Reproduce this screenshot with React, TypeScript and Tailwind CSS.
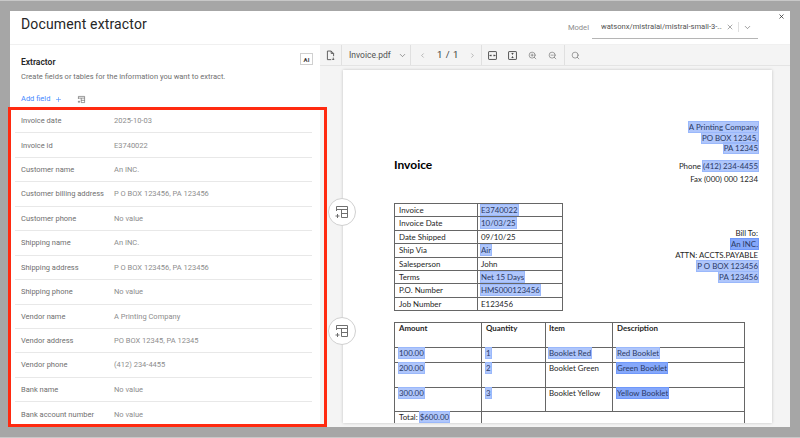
import { ChevronDown, ChevronLeft, ChevronRight, Plus, Search, X, ZoomIn, ZoomOut } from 'lucide-react';
import type { ReactNode } from 'react';

const FIELDS = [
  ['Invoice date', '2025-10-03'],
  ['Invoice id', 'E3740022'],
  ['Customer name', 'An INC.'],
  ['Customer billing address', 'P O BOX 123456, PA 123456'],
  ['Customer phone', 'No value'],
  ['Shipping name', 'An INC.'],
  ['Shipping address', 'P O BOX 123456, PA 123456'],
  ['Shipping phone', 'No value'],
  ['Vendor name', 'A Printing Company'],
  ['Vendor address', 'PO BOX 12345, PA 12345'],
  ['Vendor phone', '(412) 234-4455'],
  ['Bank name', 'No value'],
  ['Bank account number', 'No value'],
];

const SUMMARY: [string, string, boolean][] = [
  ['Invoice', 'E3740022', true],
  ['Invoice Date', '10/03/25', true],
  ['Date Shipped', '09/10/25', false],
  ['Ship Via', 'Air', true],
  ['Salesperson', 'John', false],
  ['Terms', 'Net 15 Days', true],
  ['P.O. Number', 'HMS000123456', true],
  ['Job Number', 'E123456', false],
];

function Hl({ children, strong }: { children: ReactNode; strong?: boolean }) {
  return (
    <span className={`text-[#2b3a66] outline outline-1 ${strong ? 'bg-[#85a8fb] outline-[#6f98fa]' : 'bg-[#afc6fb] outline-[#9ab8fb]'}`}>
      {children}
    </span>
  );
}

function TableIcon({ size = 12, className = '' }: { size?: number; className?: string }) {
  return (
    <svg width={size} height={size} viewBox="0 0 16 16" fill="none" stroke="currentColor" strokeWidth="1" className={className}>
      <path d="M2.5 7V2.5h11v11H7.5" />
      <path d="M2.5 5.5h11M7.5 5.5v8M7.5 9.5h6" />
      <path d="M3.5 10v4M1.5 12h4" />
    </svg>
  );
}

function FileIcon() {
  return (
    <svg width="11" height="11" viewBox="0 0 16 16" fill="none" stroke="#525252" strokeWidth="1.3">
      <path d="M9 14H3.5V1.5H9L12.5 5v4" />
      <path d="M9 1.5V5h3.5" />
      <path d="M12 11v3.5M10.5 13l1.5 1.5 1.5-1.5" />
    </svg>
  );
}

function FitIcon({ vertical }: { vertical?: boolean }) {
  return (
    <svg width="9" height="9" viewBox="0 0 16 16" fill="none" stroke="#393939" strokeWidth="1.5">
      <rect x="1" y="1" width="14" height="14" rx="1" />
      {vertical ? <path d="M8 3.5v3M8 9.5v3M6.5 5l1.5-1.5L9.5 5M6.5 11L8 12.5 9.5 11" /> : <path d="M3.5 8h3M9.5 8h3M5 6.5L3.5 8 5 9.5M11 6.5L12.5 8 11 9.5" />}
    </svg>
  );
}

function FloatingTable({ className }: { className: string }) {
  return (
    <div className={`absolute left-[328px] flex h-[28px] w-[28px] items-center justify-center rounded-full border border-[#d0d0d0] bg-white text-[#6f6f6f] ${className}`}>
      <TableIcon size={16} />
    </div>
  );
}

function Toolbar() {
  return (
    <div className="flex h-[21px] shrink-0 items-center border-b border-[#e4e4e4] text-[#525252]">
      <div className="flex w-[21px] justify-center"><FileIcon /></div>
      <div className="flex h-full w-[69px] items-center border-l border-[#e0e0e0] pl-[7px] text-[8.5px]">
        Invoice.pdf
        <ChevronDown size={9} strokeWidth={1.5} className="ml-[7px]" />
      </div>
      <div className="flex h-full w-[71px] items-center border-l border-[#e0e0e0] text-[#8d8d8d]">
        <ChevronLeft size={7} strokeWidth={2} className="ml-[8px]" />
        <span className="ml-[11px] w-[24px] whitespace-nowrap text-[9.5px] tracking-[0.5px] text-[#393939]">1 / 1</span>
        <ChevronRight size={7} strokeWidth={2} className="ml-[8px]" />
      </div>
      <div className="flex h-full w-[83px] items-center gap-[11px] border-l border-[#e0e0e0] pl-[6px] text-[#525252]">
        <FitIcon />
        <FitIcon vertical />
        <ZoomIn size={9} strokeWidth={1.4} />
        <ZoomOut size={9} strokeWidth={1.4} />
      </div>
      <div className="flex h-full items-center border-l border-[#e0e0e0] pl-[6px]">
        <Search size={9} strokeWidth={1.4} />
      </div>
    </div>
  );
}

function InvoicePage() {
  return (
    <div className="mx-auto h-[353px] w-[429px] overflow-hidden bg-white pl-[51px] pr-[14px] text-[7.9px] leading-[10.5px] text-[#262626] shadow-[0_0_3px_rgba(0,0,0,0.2)]" style={{ fontFamily: 'Lato, sans-serif' }}>
      <div className="flex h-[133px] justify-between pt-[52px]">
        <div className="mt-[35px] text-[12px] font-bold leading-[16px] text-black">Invoice</div>
        <div className="text-right">
          <div><Hl>A Printing Company</Hl></div>
          <div><Hl>PO BOX 12345,</Hl></div>
          <div><Hl>PA 12345</Hl></div>
          <div className="mt-[7px]">Phone <Hl>(412) 234-4455</Hl></div>
          <div className="mt-[3px]">Fax (000) 000 1234</div>
        </div>
      </div>
      <div className="flex justify-between">
        <table className="h-[108px] w-[169px] table-fixed border-collapse">
          <tbody>
            {SUMMARY.map(([label, value, hl]) => (
              <tr key={label} className="h-[13.4px]">
                <td className="w-[83px] border border-[#666] py-0 pl-[4px]">{label}</td>
                <td className="border border-[#666] py-0 pl-[3px]">{hl ? <Hl>{value}</Hl> : value}</td>
              </tr>
            ))}
          </tbody>
        </table>
        <div className="mt-[25px] text-right leading-[11px]">
          <div>Bill To:</div>
          <div><Hl strong>An INC.</Hl></div>
          <div>ATTN: ACCTS.PAYABLE</div>
          <div><Hl>P O BOX 123456</Hl></div>
          <div><Hl>PA 123456</Hl></div>
        </div>
      </div>
      <table className="mt-[11px] w-[351px] table-fixed border-collapse">
        <tbody>
          <tr className="h-[25px] align-top font-bold">
            <td className="w-[87px] border border-[#666] pl-[4px]">Amount</td>
            <td className="w-[64px] border border-[#666] pl-[4px]">Quantity</td>
            <td className="w-[67px] border border-[#666] pl-[3px]">Item</td>
            <td className="border border-[#666] pl-[4px]">Description</td>
          </tr>
          <tr className="h-[15px] align-top">
            <td className="border border-[#666] pl-[4px]"><Hl>100.00</Hl></td>
            <td className="border border-[#666] pl-[4px]"><Hl>1</Hl></td>
            <td className="border border-[#666] pl-[3px]"><Hl>Booklet Red</Hl></td>
            <td className="border border-[#666] pl-[4px]"><Hl>Red Booklet</Hl></td>
          </tr>
          <tr className="h-[25px] align-top">
            <td className="border border-[#666] pl-[4px]"><Hl>200.00</Hl></td>
            <td className="border border-[#666] pl-[4px]"><Hl>2</Hl></td>
            <td className="border border-[#666] pl-[3px]">Booklet Green</td>
            <td className="border border-[#666] pl-[4px]"><Hl strong>Green Booklet</Hl></td>
          </tr>
          <tr className="h-[24px] align-top">
            <td className="border border-[#666] pl-[4px]"><Hl>300.00</Hl></td>
            <td className="border border-[#666] pl-[4px]"><Hl>3</Hl></td>
            <td className="border border-[#666] pl-[3px]">Booklet Yellow</td>
            <td className="border border-[#666] pl-[4px]"><Hl strong>Yellow Booklet</Hl></td>
          </tr>
          <tr className="h-[24px] align-top">
            <td className="border border-[#666] pl-[4px]">Total: <Hl>$600.00</Hl></td>
            <td colSpan={3} className="border border-[#666]" />
          </tr>
        </tbody>
      </table>
    </div>
  );
}

export default function App() {
  return (
    <div className="relative h-[438px] w-[800px] overflow-hidden border-y border-[#c8c8c8] bg-[#a6a6a6] px-[10px] pb-[10px] pt-[10px]" style={{ fontFamily: 'Roboto, sans-serif' }}>
      <div className="relative flex h-[416px] flex-col bg-white">
        <header className="flex h-[33px] shrink-0 items-center">
          <h1 className="mb-[6px] ml-[11px] text-[14px] tracking-[0.15px] text-[#262626]">Document extractor</h1>
          <span className="ml-auto text-[7.6px] text-[#8d8d8d]">Model</span>
          <div className="ml-[3px] mr-[32px] flex h-[23px] w-[166px] items-center border-b border-[#b5b5b5] pl-[9px] text-[7.6px] text-[#525252]">
            <span className="w-[121px] overflow-hidden whitespace-nowrap">watsonx/mistralai/mistral-small-3-...</span>
            <X size={8} strokeWidth={1.5} className="ml-[4px]" />
            <span className="ml-[4px] h-[10px] border-l border-[#e0e0e0]" />
            <ChevronDown size={9} strokeWidth={1.5} className="ml-[4px]" />
          </div>
          <X size={7} strokeWidth={2.5} className="absolute right-[5px] top-[2px] text-[#262626]" />
        </header>
        <div className="flex min-h-0 flex-1 border-t border-[#f0f0f0]">
          <aside className="w-[310px] shrink-0 overflow-hidden">
            <div className="flex h-[64px] pl-[11px] pr-[7px]">
              <div className="pt-[11px]">
                <div className="text-[8.5px] font-semibold leading-[12px] text-[#262626]">Extractor</div>
                <p className="mt-[3px] whitespace-nowrap text-[7.5px] leading-[12px] text-[#6f6f6f]">Create fields or tables for the information you want to extract.</p>
                <div className="mt-[10px] flex items-center text-[7.5px] leading-[12px] text-[#4589ff]">
                  Add field
                  <Plus size={7} strokeWidth={2} className="ml-[5px]" />
                  <TableIcon size={9} className="ml-[15px] text-[#525252]" />
                </div>
              </div>
              <div className="ml-auto mt-[8px] flex h-[12px] w-[13px] items-center justify-center border border-[#d0d0d0] text-[6px] font-bold text-[#393939]">AI</div>
            </div>
            <div className="pl-[5px] pr-[8px]">
              {FIELDS.map(([name, value], i) => (
                <div key={name} className={`flex h-[24.45px] items-center pl-[6px] text-[7.5px] text-[#6f6f6f] ${i < FIELDS.length - 1 ? 'border-b border-[#e8e8e8]' : ''}`}>
                  <span className="w-[93px] whitespace-nowrap">{name}</span>
                  <span className="text-[#8d8d8d]">{value}</span>
                </div>
              ))}
            </div>
          </aside>
          <main className="flex min-w-0 flex-1 flex-col bg-[#f4f4f4]">
            <Toolbar />
            <div className="flex-1 pt-[4px]">
              <div className="ml-[23px] w-[429px]">
                <InvoicePage />
              </div>
            </div>
          </main>
        </div>
      </div>
      <FloatingTable className="top-[197px]" />
      <FloatingTable className="top-[316px]" />
      <div className="absolute left-[8px] top-[106px] h-[320px] w-[319px] border-[3px] border-[#ff2a10]" />
    </div>
  );
}
